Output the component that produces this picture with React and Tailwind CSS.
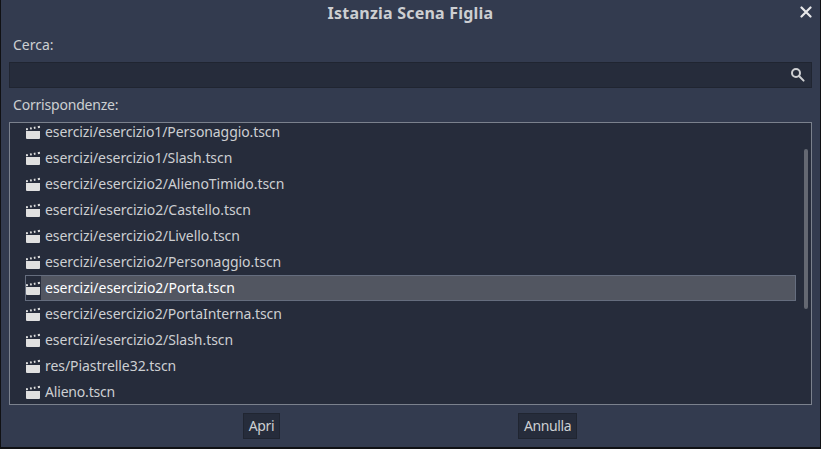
const FILES = [
  { path: 'esercizi/esercizio1/Personaggio.tscn', tracking: 'tracking-[-0.08px]' },
  { path: 'esercizi/esercizio1/Slash.tscn', tracking: 'tracking-[-0.07px]' },
  { path: 'esercizi/esercizio2/AlienoTimido.tscn', tracking: 'tracking-[-0.05px]' },
  { path: 'esercizi/esercizio2/Castello.tscn', tracking: 'tracking-[-0.03px]' },
  { path: 'esercizi/esercizio2/Livello.tscn', tracking: 'tracking-[-0.05px]' },
  { path: 'esercizi/esercizio2/Personaggio.tscn', tracking: 'tracking-[-0.05px]' },
  { path: 'esercizi/esercizio2/Porta.tscn', tracking: 'tracking-[-0.02px]', selected: true },
  { path: 'esercizi/esercizio2/PortaInterna.tscn', tracking: 'tracking-[-0.06px]' },
  { path: 'esercizi/esercizio2/Slash.tscn', tracking: 'tracking-[-0.04px]' },
  { path: 'res/Piastrelle32.tscn', tracking: 'tracking-[-0.06px]' },
  { path: 'Alieno.tscn', tracking: 'tracking-[-0.18px]' },
];

function SceneIcon() {
  return (
    <svg width="16" height="16" viewBox="0 0 16 16" fill="#e0e0e0" className="shrink-0">
      <path d="M1 7h14v7a1 1 0 0 1-1 1H2a1 1 0 0 1-1-1z" />
      <path d="M1 4.2l1.6-.3.5 2-1.8.4H1zM4.8 3.5l1.7-.3.5 2-1.7.3zM8.6 2.9l1.7-.3.4 2-1.6.3zM12.6 2.2L14.8 1.8l.3 2-2 .4z" />
    </svg>
  );
}

function FileRow({ path, tracking, selected }) {
  return (
    <li
      className={
        selected
          ? 'flex h-[26px] shrink-0 items-center border border-[#656d7e] bg-[#525661] text-white'
          : 'flex h-[26px] shrink-0 items-center border border-transparent text-[#cdcfd2]'
      }
    >
      <span className="flex h-full w-[15px] shrink-0 items-center bg-[#262c3b]">
        <span className="-ml-px flex"><SceneIcon /></span>
      </span>
      <span className={`pb-0.5 pl-1 whitespace-nowrap ${tracking}`}>{path}</span>
    </li>
  );
}

function DialogButton({ children, className }) {
  return (
    <button className={`h-[26px] border border-[#202531] bg-[#262c3b] text-center leading-6 ${className}`}>
      {children}
    </button>
  );
}

export default function App() {
  return (
    <div className="h-[449px] w-[821px] overflow-hidden bg-[#101114] pr-px pb-0.5 pl-px font-['Noto_Sans',sans-serif] text-[14px] text-[#cdcfd2]">
      <div className="flex h-full flex-col bg-[#333b4f] px-2">
        <header className="flex h-[26px] shrink-0 items-center">
          <span className="w-5" />
          <h1 className="flex-1 text-center text-[16px] leading-[26px] font-bold tracking-[0.22px]">Istanzia Scena Figlia</h1>
          <button aria-label="Chiudi" className="mt-[-2px] flex w-5 justify-center pl-2">
            <svg width="12" height="12" viewBox="0 0 12 12" fill="none" stroke="#e8e8ea" strokeWidth="2.2" strokeLinecap="round" className="shrink-0">
              <path d="M1.5 1.5l9 9M10.5 1.5l-9 9" />
            </svg>
          </button>
        </header>
        <label className="mt-2 h-[28px] shrink-0 pl-1 leading-[22px]">Cerca:</label>
        <div className="flex h-[26px] shrink-0 items-center justify-end border border-[#202531] bg-[#262c3b] pr-[5px]">
          <svg width="16" height="16" viewBox="0 0 16 16" fill="none" stroke="#cfd0d3" strokeWidth="2">
            <circle cx="6" cy="6" r="4" />
            <path d="M9 9l4.6 4.6" strokeLinecap="round" />
          </svg>
        </div>
        <div className="mt-1.5 h-[28px] shrink-0 pl-1 leading-[22px] tracking-[-0.2px]">Corrispondenze:</div>
        <div className="flex h-[283px] shrink-0 overflow-hidden border border-[#7b818d] bg-[#262c3b] pr-[3px] pl-[15px]">
          <ul className="mt-[-4px] flex flex-1 flex-col">
            {FILES.map((file) => (
              <FileRow key={file.path} {...file} />
            ))}
          </ul>
          <div className="mt-[26px] ml-2 h-[160px] w-1 rounded-sm bg-[#646872]" />
        </div>
        <footer className="flex pt-2">
          <DialogButton className="ml-[234px] w-[37px] tracking-[-0.3px]">Apri</DialogButton>
          <DialogButton className="ml-[238px] w-[59px] tracking-[-0.4px]">Annulla</DialogButton>
        </footer>
      </div>
    </div>
  );
}
